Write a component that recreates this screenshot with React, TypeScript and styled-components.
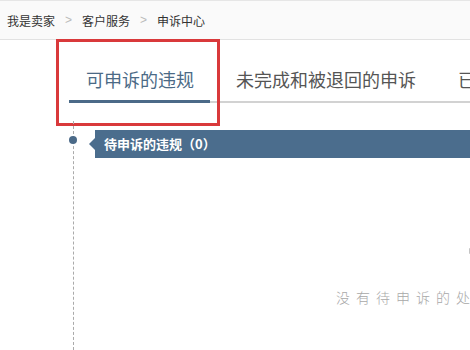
import styled, { createGlobalStyle } from 'styled-components'

const GlobalStyle = createGlobalStyle`
  html, body {
    margin: 0;
    padding: 0;
    background: #fff;
    overflow: hidden;
  }
  body {
    font-family: "Noto Sans CJK SC", "Noto Sans", sans-serif;
    width: 470px;
    height: 350px;
  }
`

const Page = styled.div`
  width: 470px;
  height: 350px;
  overflow: hidden;
  display: flex;
  flex-direction: column;
`

const Breadcrumb = styled.div`
  height: 38px;
  border-top: 1px solid #e6e6e6;
  border-bottom: 1px solid #e2e2e2;
  background: #fafafa;
  display: flex;
  align-items: center;
  padding-left: 7px;
  gap: 10px;
  font-size: 12px;
  color: #333;
`

const Sep = styled.span`
  color: #bbb;
  font-family: "Liberation Sans", sans-serif;
  font-size: 12px;
`

const TabArea = styled.div`
  position: relative;
  padding: 27px 0 0 69px;
`

const TabBar = styled.div`
  display: flex;
  border-bottom: 2px solid #d2d2d2;
  white-space: nowrap;
  width: 600px;
`

const Tab = styled.div<{ $active?: boolean }>`
  padding: 0 16px 9px 17px;
  margin-right: 9px;
  font-size: 18px;
  line-height: 24px;
  color: ${(p) => (p.$active ? '#4b6a86' : '#555')};
  margin-bottom: -2px;
  border-bottom: 3px solid ${(p) => (p.$active ? '#4b6a88' : 'transparent')};
`

const Highlight = styled.div`
  position: absolute;
  left: 56px;
  top: -1px;
  width: 158px;
  height: 81px;
  border: 3px solid #d9393b;
  pointer-events: none;
`

const Timeline = styled.div`
  flex: 1;
  margin-top: 18px;
  margin-left: 73px;
  border-left: 1px dashed #aaa;
  position: relative;
  padding-top: 9px;
`

const Dot = styled.span`
  position: absolute;
  left: -5px;
  top: 15px;
  width: 8px;
  height: 8px;
  border-radius: 50%;
  background: #4b6a88;
`

const Banner = styled.div`
  position: relative;
  margin-left: 21px;
  height: 28px;
  background: #4b6d8d;
  color: #fff;
  font-size: 13px;
  font-weight: bold;
  line-height: 28px;
  padding-left: 9px;
  &::before {
    content: '';
    position: absolute;
    left: -6px;
    top: 8px;
    border-style: solid;
    border-width: 6px 6px 6px 0;
    border-color: transparent #4b6d8d transparent transparent;
  }
`

const Empty = styled.div`
  margin-top: 129px;
  margin-left: 262px;
  white-space: nowrap;
  font-size: 14px;
  letter-spacing: 6px;
  color: #a8a8a8;
  font-weight: 300;
`

const Mark = styled.span`
  position: absolute;
  right: -2px;
  top: 127px;
  width: 3px;
  height: 6px;
  background: #c4c4c4;
  border-radius: 1px;
`

export default function App() {
  return (
    <Page>
      <GlobalStyle />
      <Breadcrumb>
        <span>我是卖家</span>
        <Sep>&gt;</Sep>
        <span>客户服务</span>
        <Sep>&gt;</Sep>
        <span>申诉中心</span>
      </Breadcrumb>
      <TabArea>
        <TabBar>
          <Tab $active>可申诉的违规</Tab>
          <Tab>未完成和被退回的申诉</Tab>
          <Tab>已完成的申诉</Tab>
        </TabBar>
        <Highlight />
      </TabArea>
      <Timeline>
        <Dot />
        <Banner>待申诉的违规（0）</Banner>
        <Mark />
        <Empty>没有待申诉的处罚记录</Empty>
      </Timeline>
    </Page>
  )
}
